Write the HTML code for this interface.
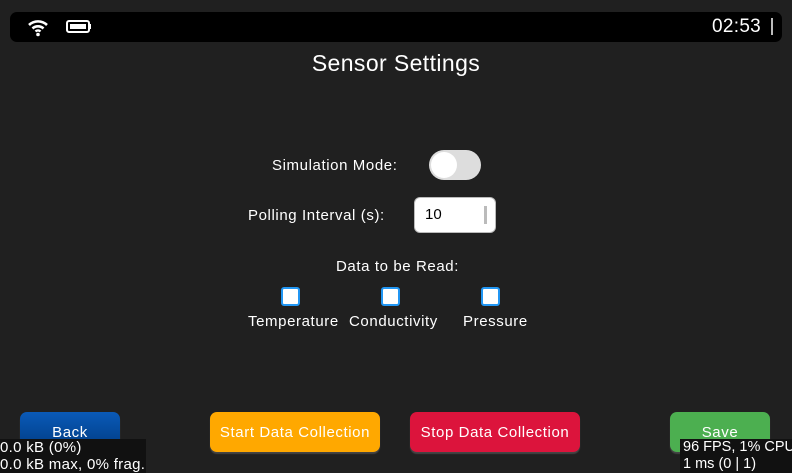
<!DOCTYPE html>
<html><head><style>
body{margin:0;width:792px;height:473px;background:#202020;position:relative;overflow:hidden;font-family:"Liberation Sans",sans-serif;color:#fff}
.a{position:absolute}
.t{font-size:15px;letter-spacing:0.6px;white-space:nowrap}
.cb{position:absolute;border:2px solid #2196f3;border-radius:3px;background:#fff;box-sizing:border-box;width:19px;height:19px}
.btn{position:absolute;top:412px;height:40px;border-radius:7px;font-size:15px;letter-spacing:0.6px;display:flex;align-items:center;justify-content:center;box-shadow:0 2px 1px #444;white-space:nowrap}
.ov{position:absolute;background:#111;font-size:15px;letter-spacing:0.3px;line-height:17px;padding:0;white-space:nowrap}
</style></head><body>
<div class="a" style="left:10px;top:12px;width:772px;height:30px;background:#000;border-radius:7px"></div>
<svg class="a" style="left:27px;top:17px" width="22" height="20" viewBox="0 0 22 20"><path d="M2 8 A13 13 0 0 1 20 8" stroke="#fff" stroke-width="2.6" fill="none"/><path d="M5.5 11.5 A8 8 0 0 1 16.5 11.5" stroke="#fff" stroke-width="2.6" fill="none"/><path d="M8.5 14.5 A3.5 3.5 0 0 1 13.5 14.5" stroke="#fff" stroke-width="2.4" fill="none"/><circle cx="11" cy="17.5" r="1.8" fill="#fff"/></svg>
<svg class="a" style="left:66px;top:19px" width="26" height="15"><rect x="1" y="2" width="22" height="11" rx="2" stroke="#fff" stroke-width="2" fill="none"/><rect x="4" y="5" width="16" height="5" fill="#fff"/><rect x="23" y="5" width="2" height="5" fill="#fff"/></svg>
<div class="a" style="left:712px;top:16px;font-size:19px;letter-spacing:0.3px">02:53</div>
<div class="a" style="left:771px;top:18px;width:2px;height:17px;background:#bbb"></div>
<div class="a" style="left:0;width:792px;top:50px;text-align:center;font-size:23px;letter-spacing:0.4px">Sensor Settings</div>
<div class="a t" style="left:272px;top:157px">Simulation Mode:</div>
<div class="a" style="left:429px;top:150px;width:52px;height:30px;border-radius:15px;background:#ddd"></div>
<div class="a" style="left:431px;top:152px;width:26px;height:26px;border-radius:13px;background:#fff"></div>
<div class="a t" style="left:248px;top:207px">Polling Interval (s):</div>
<div class="a" style="left:415px;top:198px;width:80px;height:34px;border-radius:5px;background:#fff;box-shadow:0 0 0 1px #bbb"></div>
<div class="a" style="left:425px;top:206px;color:#000;font-size:15px">10</div>
<div class="a" style="left:484px;top:206px;width:3px;height:18px;background:#bbb"></div>
<div class="a t" style="left:336px;top:258px">Data to be Read:</div>
<div class="cb" style="left:281px;top:287px"></div>
<div class="cb" style="left:381px;top:287px"></div>
<div class="cb" style="left:481px;top:287px"></div>
<div class="a t" style="left:248px;top:313px">Temperature</div>
<div class="a t" style="left:349px;top:313px">Conductivity</div>
<div class="a t" style="left:463px;top:313px">Pressure</div>
<div class="btn" style="left:20px;width:100px;background:linear-gradient(#0a5ab8,#003a80)">Back</div>
<div class="btn" style="left:210px;width:170px;background:#ffa800">Start Data Collection</div>
<div class="btn" style="left:410px;width:170px;background:#dc143c">Stop Data Collection</div>
<div class="btn" style="left:670px;width:100px;background:#4caf50">Save</div>
<div class="ov" style="left:0;top:439px;width:146px;height:34px">0.0 kB (0%)<br>0.0 kB max, 0% frag.</div>
<div class="ov" style="left:680px;top:439px;width:112px;height:34px;padding-left:3px;font-size:14.5px;letter-spacing:0">96 FPS, 1% CPU<br>1 ms (0 | 1)</div>
</body></html>
